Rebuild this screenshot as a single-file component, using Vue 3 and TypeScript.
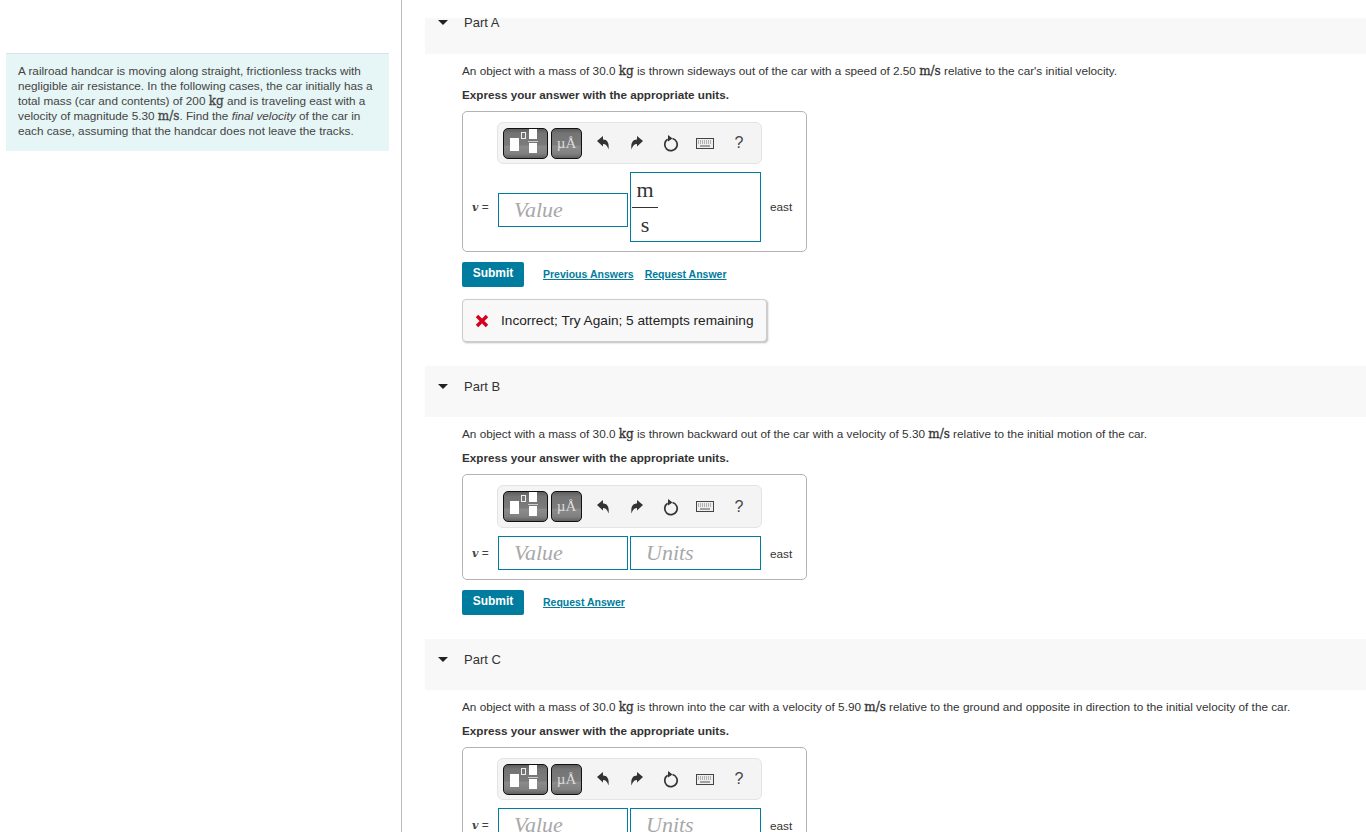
<template>
  <div class="page">
    <aside class="intro-col">
      <div class="intro">
        A railroad handcar is moving along straight, frictionless tracks with negligible air resistance. In the
        following cases, the car initially has a total mass (car and contents) of 200 <span class="math">kg</span> and
        is traveling east with a velocity of magnitude 5.30 <span class="math">m/s</span>. Find the
        <em>final velocity</em> of the car in each case, assuming that the handcar does not leave the tracks.
      </div>
    </aside>

    <main class="parts-col">
      <div class="parts-scroll">
        <section v-for="part in parts" :key="part.name" class="part">
          <header class="part-head">
            <span class="caret"></span>
            <span class="part-name">{{ part.name }}</span>
          </header>

          <div class="part-body">
            <p class="question">
              An object with a mass of 30.0 <span class="math">kg</span> is thrown {{ part.verb }}
              {{ part.speed }} <span class="math">{{ part.unit }}</span> {{ part.rest }}
            </p>
            <p class="express">Express your answer with the appropriate units.</p>

            <div class="answer-box">
              <div class="toolbar">
                <button type="button" class="tpl-btn tpl-btn--wide">
                  <svg width="43" height="29" viewBox="0 0 43 29">
                    <rect x="6" y="9" width="9" height="13" fill="#fff" />
                    <rect x="17.500" y="3.500" width="4" height="6" fill="none" stroke="#eee" />
                    <rect x="25" y="0" width="8" height="10" fill="#fff" />
                    <rect x="24" y="12" width="10" height="1" fill="#ccc" />
                    <rect x="25" y="14" width="8" height="10" fill="#fff" />
                  </svg>
                </button>
                <button type="button" class="tpl-btn tpl-btn--unit">µÅ</button>
                <div class="tool-icons">
                  <svg width="14" height="14" viewBox="0 0 14 14">
                    <path d="M1 5 7 0V3.500C11 3.500 13.500 6.500 12.500 13.500 11.500 10 10 8 7 8V10.500Z" fill="#333" />
                  </svg>
                  <svg width="14" height="14" viewBox="0 0 14 14">
                    <path d="M13 5 7 0V3.500C3 3.500 .5 6.500 1.500 13.500 2.500 10 4 8 7 8V10.500Z" fill="#333" />
                  </svg>
                  <svg width="16" height="18" viewBox="0 0 16 18">
                    <path d="M9.500 4.500A6.200 6.200 0 1 1 4.600 5.300" fill="none" stroke="#333" stroke-width="1.700" />
                    <path d="M5 1 9.500 4.500 5 7.500Z" fill="#333" />
                  </svg>
                  <svg width="18" height="11" viewBox="0 0 18 11">
                    <rect x="0.500" y="0.500" width="17" height="10" fill="#eee" stroke="#444" />
                    <path d="M2 3h14M2 5h14" stroke="#777" stroke-dasharray="1 1" />
                    <path d="M4 8h10" stroke="#555" />
                  </svg>
                  <span class="help">?</span>
                </div>
              </div>

              <div class="answer-row" :class="{ 'answer-row--frac': part.fraction }">
                <span class="var"><i>v</i> =</span>
                <div class="field field--value">Value</div>
                <div v-if="part.fraction" class="field field--fraction">
                  <span class="frac"><span class="frac-top">m</span><span class="frac-bottom">s</span></span>
                </div>
                <div v-else class="field field--units">Units</div>
                <span class="dir">east</span>
              </div>
            </div>

            <div class="actions">
              <button type="button" class="submit">Submit</button>
              <a v-if="part.fraction" class="link">Previous Answers</a>
              <a class="link">Request Answer</a>
            </div>

            <div v-if="part.fraction" class="feedback">
              <svg width="14" height="14" viewBox="0 0 14 14">
                <path d="M2 2 12 12M12 2 2 12" stroke="#d6001c" stroke-width="3.400" />
              </svg>
              <span>Incorrect; Try Again; 5 attempts remaining</span>
            </div>
          </div>
        </section>
      </div>
    </main>
  </div>
</template>

<script setup lang="ts">
interface Part {
  name: string;
  verb: string;
  speed: string;
  unit: string;
  rest: string;
  fraction: boolean;
}

const parts: Part[] = [
  {
    name: 'Part A',
    verb: 'sideways out of the car with a speed of',
    speed: '2.50',
    unit: 'm/s',
    rest: "relative to the car's initial velocity.",
    fraction: true
  },
  {
    name: 'Part B',
    verb: 'backward out of the car with a velocity of',
    speed: '5.30',
    unit: 'm/s',
    rest: 'relative to the initial motion of the car.',
    fraction: false
  },
  {
    name: 'Part C',
    verb: 'into the car with a velocity of',
    speed: '5.90',
    unit: 'm/s',
    rest: 'relative to the ground and opposite in direction to the initial velocity of the car.',
    fraction: false
  }
];
</script>

<style>
html,
body {
  margin: 0;
  overflow: hidden;
}
</style>

<style scoped>
.page {
  display: flex;
  height: 832px;
  overflow: hidden;
  background: #fff;
  color: #333;
  font-family: 'Liberation Sans', Arial, sans-serif;
  font-size: 11.75px;
}

.intro-col {
  flex: 0 0 401px;
  box-sizing: border-box;
  padding: 53px 12px 0 6px;
}

.intro {
  padding: 9px 12px 13px 12px;
  background: #e6f5f5;
  border-top: 1px solid #d8e4e6;
  line-height: 15px;
  color: #444;
}

.math {
  font-family: 'DejaVu Serif', serif;
  font-size: 12px;
  line-height: 0;
  -webkit-text-stroke: 0.3px currentColor;
}

.parts-col {
  flex: 1;
  min-width: 0;
  border-left: 1px solid #bbb;
  padding: 18px 0 0 23px;
  overflow: hidden;
}

.parts-scroll {
  margin-top: -16px;
  clip-path: inset(16px 0 0 0);
}

.part-head {
  height: 51px;
  box-sizing: border-box;
  display: flex;
  align-items: flex-start;
  padding: 13px 0 0 13px;
  background: #f8f8f8;
  font-size: 13px;
  line-height: 15px;
}

.part:first-child .part-head {
  height: 52px;
}

.caret {
  width: 0;
  height: 0;
  margin: 5px 16px 0 0;
  border-left: 5px solid transparent;
  border-right: 5px solid transparent;
  border-top: 5px solid #222;
}

.part-body {
  padding: 9px 0 24px 37px;
}

.question,
.express {
  margin: 0;
  line-height: 16px;
}

.express {
  margin-top: 8px;
  font-size: 11.7px;
  font-weight: 700;
}

.answer-box {
  width: 345px;
  box-sizing: border-box;
  margin-top: 8px;
  padding: 10px 9px 10px 9px;
  border: 1px solid #b3b3b3;
  border-radius: 5px;
}

.toolbar {
  display: flex;
  align-items: center;
  width: 265px;
  height: 42px;
  box-sizing: border-box;
  margin-left: 25px;
  padding-left: 5px;
  background: #f4f4f4;
  border: 1px solid #e4e4e4;
  border-radius: 6px;
}

.part:nth-child(2) .answer-box {
  padding-bottom: 9px;
}

.part:nth-child(2) .toolbar {
  height: 43px;
}

.tpl-btn {
  height: 31px;
  box-sizing: border-box;
  padding: 0;
  display: flex;
  align-items: center;
  justify-content: center;
  background: linear-gradient(#5c5c5c, #747474 15%, #7b7b7b 55%, #8b8b8b 60%, #808080 85%, #606060);
  border: 1px solid #111;
  border-radius: 5px;
}

.tpl-btn--wide {
  width: 45px;
}

.tpl-btn--unit {
  width: 31px;
  margin-left: 3px;
  color: #ddd;
  font-family: 'Liberation Serif', serif;
  font-size: 15px;
}

.tool-icons {
  display: grid;
  grid-template-columns: repeat(5, 34px);
  justify-items: center;
  align-items: center;
  margin-left: 4px;
}

.help {
  font-size: 16px;
  color: #444;
}

.answer-row {
  display: flex;
  align-items: center;
  margin-top: 8px;
}

.answer-row--frac .field--value {
  margin-top: 6px;
}

.var {
  width: 26px;
  font-size: 12px;
  color: #444;
}

.var i {
  font-family: 'DejaVu Serif', serif;
  font-size: 11px;
  font-weight: 700;
}

.field {
  box-sizing: border-box;
  border: 1px solid #007c9e;
  font-family: 'Liberation Serif', serif;
  font-style: italic;
  font-size: 22px;
  color: #a8a8a8;
}

.field--value,
.field--units {
  height: 34px;
  line-height: 32px;
  padding-left: 15px;
}

.field--value {
  width: 130px;
}

.field--units {
  width: 131px;
  margin-left: 2px;
}

.field--fraction {
  width: 131px;
  height: 70px;
  margin-left: 2px;
  margin-bottom: -1px;
  padding-left: 1px;
  display: flex;
  align-items: center;
}

.frac {
  display: flex;
  flex-direction: column;
  align-items: center;
  width: 26px;
  font-style: normal;
  font-size: 22px;
  color: #333;
}

.frac-top {
  line-height: 34px;
  border-bottom: 1px solid #333;
  width: 100%;
  text-align: center;
}

.frac-bottom {
  line-height: 34px;
}

.dir {
  margin-left: 9px;
}

.actions {
  display: flex;
  align-items: center;
  margin-top: 10px;
}

.submit {
  width: 62px;
  height: 25px;
  padding: 0 0 4px;
  border: 0;
  border-radius: 2px;
  background: #007c9e;
  color: #fff;
  font-family: inherit;
  font-size: 12px;
  font-weight: 700;
  margin-right: 19px;
}

.link {
  margin-right: 11px;
  margin-bottom: 2px;
  color: #007c9e;
  font-size: 10.5px;
  font-weight: 700;
  text-decoration: underline;
}

.feedback {
  display: flex;
  align-items: center;
  gap: 12px;
  width: 305px;
  height: 43px;
  box-sizing: border-box;
  margin-top: 12px;
  padding-left: 12px;
  background: #f8f8f8;
  border: 1px solid #ccc;
  border-radius: 4px;
  box-shadow: 1px 1px 2px #bbb;
  color: #222;
  font-size: 13.65px;
}
</style>
